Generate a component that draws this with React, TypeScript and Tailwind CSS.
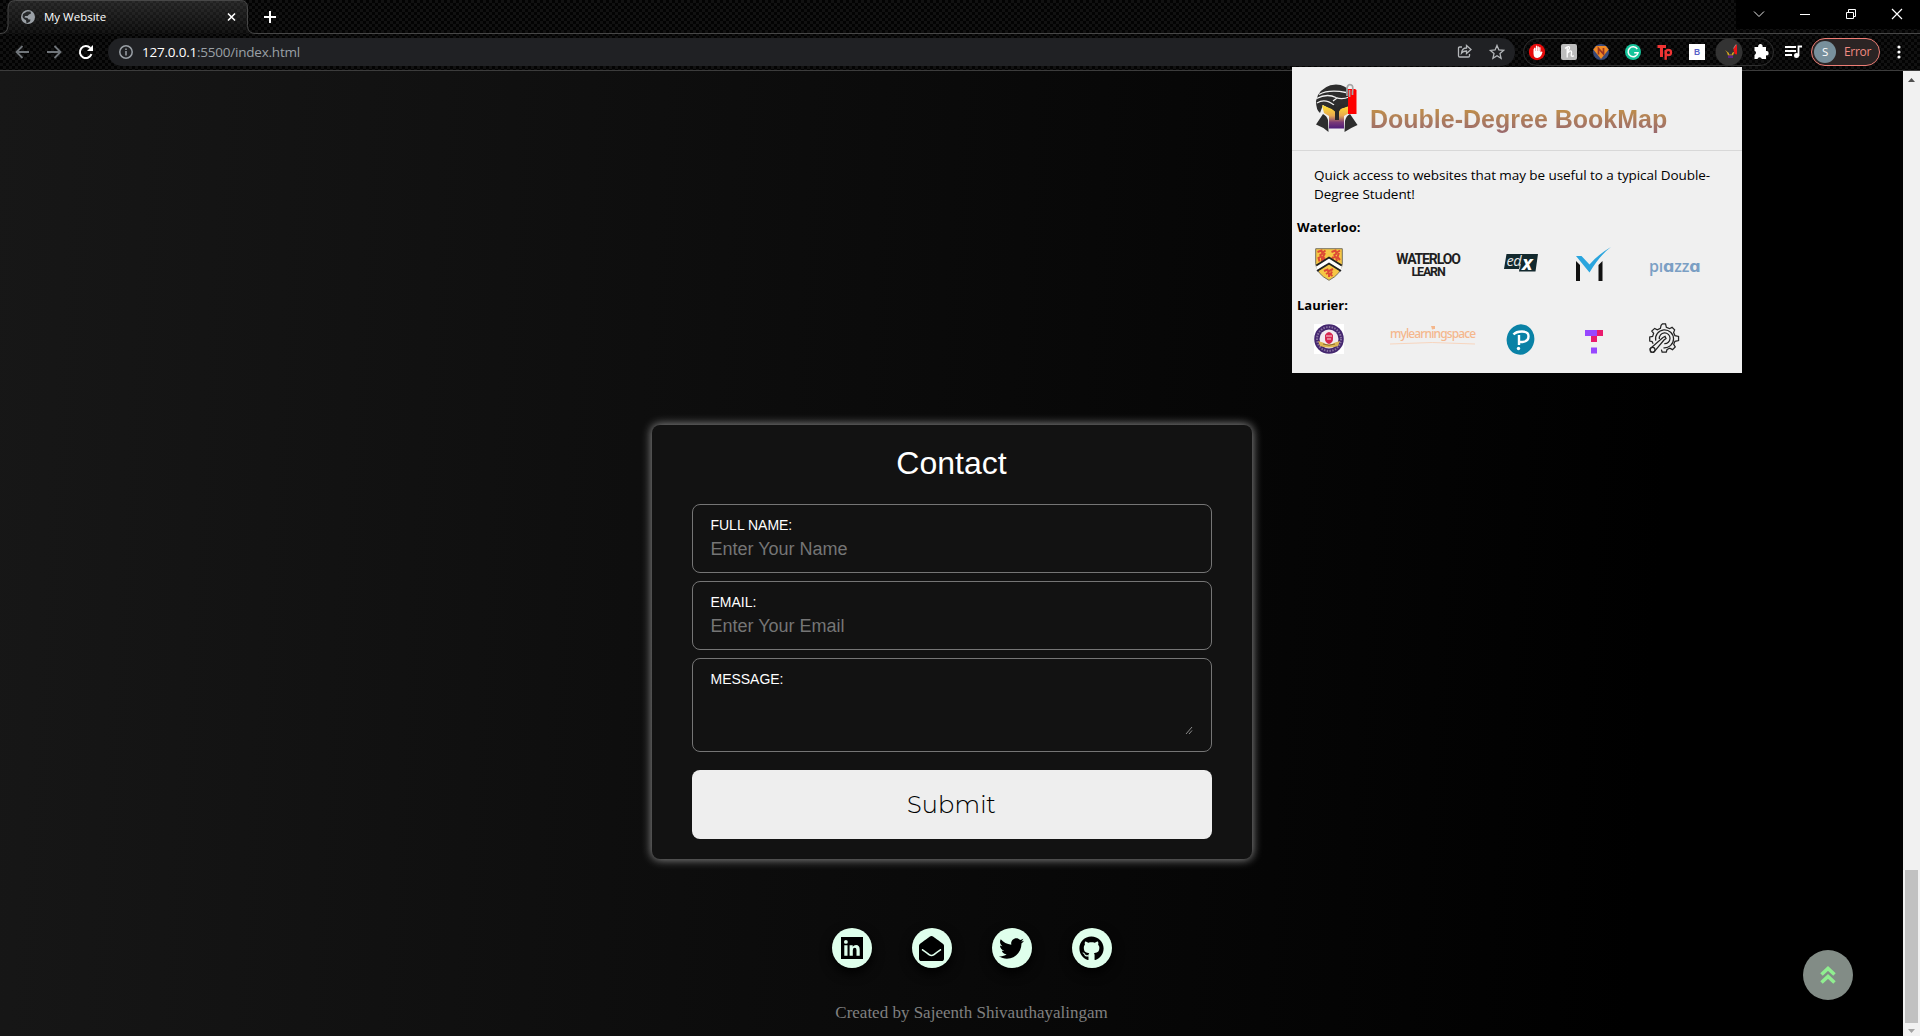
import React from "react";
import { FaEnvelopeOpen, FaTwitter, FaGithub } from "react-icons/fa";

const UI = "font-['Open_Sans','Noto_Sans',sans-serif]";
const ARIAL = "font-['Liberation_Sans',Arial,sans-serif]";

const carbon =
  "bg-[#050505] bg-[image:repeating-conic-gradient(#111_0_25%,#030303_0_50%)] bg-[length:6px_6px]";

function TabStrip() {
  return (
    <div className="relative flex h-[34px] items-start">
      <div className="absolute inset-0 border-b border-[#474747]" />
      <svg className="relative h-[34px] w-[258px] shrink-0" viewBox="0 0 258 34">
        <defs>
          <pattern id="weave" width="6" height="6" patternUnits="userSpaceOnUse">
            <path d="M0 0h6v6H0z" fill="#0b0b0b" />
            <path d="M0 0h3v3H0zM3 3h3v3H3z" fill="#151515" />
          </pattern>
          <linearGradient id="sheen" x2="0" y2="1">
            <stop stopColor="#fff" stopOpacity=".1" />
            <stop offset="1" stopColor="#fff" stopOpacity="0" />
          </linearGradient>
        </defs>
        <path d="M0 34v-.5q8 0 8-8V8q0-7.500 7.500-7.500h225Q247.500.5 247.500 8v17.500q0 8 8 8h2.500v.5z" fill="url(#weave)" />
        <path d="M0 33.500q8 0 8-8V8q0-7.500 7.500-7.500h225Q247.500.5 247.500 8v17.500q0 8 8 8h2.500" fill="url(#sheen)" stroke="#474747" />
        <circle cx="28" cy="17" r="7" fill="#9aa0a6" />
        <path d="M27 11.500h3.500l.5 2-2 1-1.500 1.500H25l-.5 1.500 3 .5 1 1.500h2l-.5 2-2.500 1.500-1 .3-.5-3-2-1.300-1.500-2 .5-3z" fill="#26282a" />
        <path d="M228 13.500l7 7m0-7l-7 7" stroke="#fff" strokeWidth="1.600" />
      </svg>
      <div className={`absolute left-[44px] top-[8px] text-[11.500px] leading-[18px] text-white ${UI}`}>My Website</div>
      <svg className="relative ml-[6px] mt-[11px] size-3" viewBox="0 0 12 12">
        <path d="M6 0v12M0 6h12" stroke="#fff" strokeWidth="2" />
      </svg>
      <svg className="relative ml-auto h-[29px] w-[184px] bg-black" viewBox="0 0 184 29" fill="none" stroke="#e6e6e6">
        <path d="M18 11.500l5 5 5-5" />
        <path d="M64 14.500h10" stroke="#fff" />
        <path d="M110.500 12.500h7v6h-7zM112.500 12v-2.500h7v7h-2" stroke="#fff" />
        <path d="M156 9l10 10m0-10l-10 10" stroke="#fff" strokeWidth="1.200" />
      </svg>
    </div>
  );
}

function NavIcons() {
  return (
    <svg className="h-[28px] w-[108px] shrink-0" viewBox="0 0 108 28" fill="none">
      <g stroke="#70757a" strokeWidth="1.800">
        <path d="M29 14H16.500m6-6l-6 6 6 6" />
        <path d="M47 14h13.500m-6-6l6 6-6 6" />
      </g>
      <path d="M91.500 16.200a6 6 0 1 1-1.200-6.200" stroke="#fff" strokeWidth="2" />
      <path d="M93 7v6h-6z" fill="#fff" />
    </svg>
  );
}

function ExtensionIcons() {
  return (
    <svg className="h-[28px] w-[252px] shrink-0" viewBox="0 0 252 28">
      <rect x=".5" y=".5" width="250" height="27" rx="13.500" fill="none" stroke="#2e2e2e" />
      <circle cx="14" cy="14" r="8.200" fill="#e60b0b" />
      <path d="M10.500 11.500v4q0 4.500 4 4.500 2.500 0 4-3l1-3q-1-1-2 .5V9.500q-.7-1-1.300 0V13h-.3V8.700q-.7-1-1.300 0V13h-.3V8q-.8-1-1.400 0v5h-.3v-3q-.8-1-1.400 0z" fill="#fff" />
      <rect x="38" y="6" width="16" height="16" rx="2" fill="#bdbdbd" />
      <path d="M42 10.500q2.500-2.500 4-1.800 1.500 1.300-1.300 4.300M44.200 9.500v10M44.500 15q2.500-3 3.800-1.800.7 1-.1 3.800-.2 2 2.800.8" fill="none" stroke="#fff" strokeWidth="1.300" />
      <circle cx="78" cy="14" r="8" fill="#3a4a78" />
      <path d="M70.300 11.500l3-3.500h9.400l3 3.500-7.700 9.500z" fill="#f08a24" />
      <path d="M75.500 16.500V10.500l5 5.500V10" stroke="#9c3420" strokeWidth="1.700" fill="none" />
      <circle cx="110" cy="14" r="8" fill="#15c39a" />
      <path d="M114.300 11a5 5 0 1 0 .7 3.800h-3.800" fill="none" stroke="#fff" strokeWidth="1.500" />
      <g fill="none" stroke="#f03434" strokeWidth="3">
        <path d="M134.500 8.500h8.500M138.500 8v11" />
        <circle cx="145.500" cy="14.500" r="2.600" strokeWidth="2.200" />
        <path d="M142.700 12v9.800" strokeWidth="2.400" />
      </g>
      <path d="M166 6h16v16h-16z" fill="#fff" />
      <text x="174" y="17" textAnchor="middle" fontSize="8.500" fontWeight="700" fill="#5a62c8" fontFamily="Liberation Sans">B</text>
      <circle cx="206" cy="14" r="13.500" fill="#333" />
      <path d="M202 12l2 2.500 1 3h5l1.500-4-2.500 1.500v1.500h-3V15z" fill="#d1a31f" />
      <path d="M205 17.500h5V20h-5z" fill="#5b2487" />
      <path d="M210.500 12q0-4 2.500-5.500l1 .5v9.500l-2.300-.5z" fill="#f01414" />
      <path d="M210.500 10.500l2.500-4" stroke="#888" />
      <path d="M231.500 9h3.700a2.300 2.300 0 1 1 4.400 0h3.400v4a2.200 2.200 0 1 1 0 4.300V21h-4.200a2.200 2.200 0 0 0-4.300 0h-3v-4a2.300 2.300 0 0 0 0-4.300z" fill="#fff" />
    </svg>
  );
}

function Toolbar() {
  return (
    <div className="flex h-[37px] items-center border-b border-[#3c3c3c]">
      <NavIcons />
      <div className="flex h-[28px] w-[1407px] shrink-0 items-center rounded-full bg-[#202124]">
        <svg className="ml-[11px] size-[14px]" viewBox="0 0 14 14" fill="none" stroke="#9aa0a6" strokeWidth="1.500">
          <circle cx="7" cy="7" r="6.200" />
          <path d="M7 6v4.500M7 3.500V5" />
        </svg>
        <div className={`ml-[9px] text-[13.500px] leading-[18px] tracking-[-0.22px] text-[#9aa0a6] ${UI}`}>
          <span className="text-white">127.0.0.1</span>:5500/index.html
        </div>
        <svg className="ml-auto mr-[10px] h-[28px] w-[48px]" viewBox="0 0 48 28" fill="none" stroke="#b4b7ba" strokeWidth="1.300">
          <path d="M5 9H2.700Q1.500 9 1.500 10.200v7.600Q1.500 19 2.700 19h8.600q1.200 0 1.200-1.200V16" />
          <path d="M4.500 15q.5-5 5-5V7.500l4.500 4-4.500 4V13q-3.500 0-5 2z" />
          <path d="M40 7.500l1.900 4.500 4.700.4-3.600 3.200 1.100 4.700-4.100-2.500-4.100 2.500 1.100-4.700-3.600-3.200 4.700-.4z" />
        </svg>
      </div>
      <div className="ml-[8px] flex">
        <ExtensionIcons />
      </div>
      <svg className="ml-[10px] h-[28px] w-[17px]" viewBox="0 0 17 28" fill="none" stroke="#fff" strokeWidth="1.800">
        <path d="M0 9h11M0 13h11M0 17h7M13.500 18V8.500H17" />
        <circle cx="11.500" cy="17.500" r="1.600" fill="#fff" />
      </svg>
      <div className={`ml-[9px] flex h-[28px] w-[69px] items-center rounded-full border border-[#ee7d75] bg-[#2b2424] text-[12px] tracking-[-0.3px] text-[#f28b82] ${UI}`}>
        <span className="ml-[2px] flex size-[22px] items-center justify-center rounded-full bg-[#78909c] text-[11.500px] text-white">S</span>
        <span className="ml-[8px]">Error</span>
      </div>
      <svg className="ml-[17px] h-[14px] w-[4px]" viewBox="0 0 4 14" fill="#fff">
        <circle cx="2" cy="2" r="1.600" />
        <circle cx="2" cy="7" r="1.600" />
        <circle cx="2" cy="12" r="1.600" />
      </svg>
    </div>
  );
}

function Helmet() {
  return (
    <svg className="h-[50px] w-[43px]" viewBox="0 0 43 50">
      <defs>
        <linearGradient id="visor" gradientUnits="userSpaceOnUse" x1="0" y1="22" x2="0" y2="46">
          <stop offset=".1" stopColor="#fdd835" />
          <stop offset=".45" stopColor="#e8a850" />
          <stop offset=".72" stopColor="#7a3a78" />
          <stop offset="1" stopColor="#4b1979" />
        </linearGradient>
      </defs>
      <path d="M3 12Q9 2 21 1.500 31 2 34 8v16l-8 2-6 3-12-7-3 8Q1 27 1 18z" fill="#2d2d2d" />
      <path d="M1.500 15.500Q12 10 21 14.500 27 17 34 14M4 11.500Q14 6 31 9.500M22 15l-4 3M2 20q8-5 17 2" stroke="#f0f0f0" strokeWidth="1.300" fill="none" />
      <path d="M7 22l11 4.500L21 29l3-2.500L34 23v7l-5 3v12.500H14V33l-5-3z" fill="url(#visor)" />
      <path d="M16 23l4-1 2 3 4-3.500 7 1.500-7 2.500-2 3V37h-4v-8.500L17 26z" fill="#292929" />
      <path d="M8 31q4 2 5 6l.5 12Q8 44 1 41.500zM35 31q-4 2-5 7l-.5 11q6-4 13-7z" fill="#2d2d2d" />
      <path d="M33 6h7l1.500 1v24H33z" fill="#fe0000" />
      <path d="M32 13V5q1-4.500 4.500-3 2 1 1 7v3M34.500 7v7" fill="none" stroke="#a6a6a6" strokeWidth="1.700" />
    </svg>
  );
}

function ShieldLogo() {
  return (
    <svg className="h-[33px] w-[28px]" viewBox="0 0 28 33">
      <path d="M.7.7h26.600v15q-.6 10-13.300 16.600Q1.300 25.700.7 15.700z" fill="#f6c744" stroke="#77715f" />
      <g fill="none" stroke="#dd4a35" strokeWidth="2">
        <path d="M2.500 4l4-1.500 1 3-3 2M7 5l3.500-2.500M10 5l-2 4 2 2M7 8l-3.500 2 1 3.500M7 9v3l3-1M16.500 4l4-1.500 1 3-3 2M21 5l4-2.500M24 5l-1.500 4 2.500 3M21 8l-3 2-1-1M21 9l1 4" />
        <path d="M9 23l3.500-1.500 1 3-2.500 1.500M14 23l4-2M17 23.500l-1.500 3 2 1.500M14 25v4" />
      </g>
      <path d="M1.300 18L14 9.500 26.700 18v4.500L14 15 1.300 22.500z" fill="#fff" />
      <path d="M1.300 17.500L14 9.500l12.700 8M2 23L14 15.500 26 23" stroke="#222" strokeWidth="1.900" fill="none" />
    </svg>
  );
}

function EdxLogo() {
  return (
    <svg className="h-[19px] w-[36px] overflow-visible" viewBox="0 0 36 19">
      <path d="M2.500 1H34l-2.500 17.500H15l.4-2.500H0z" fill="#13292e" />
      <path d="M15.500 16l.8-5" stroke="#f0f0f0" strokeWidth=".8" />
      <text x="2.500" y="13" fontSize="14.500" fontStyle="italic" fontWeight="500" fill="#e8eaea" fontFamily="Open Sans" letterSpacing="-.4">ed</text>
      <text x="18" y="16.500" fontSize="20" fontStyle="italic" fontWeight="700" fill="#fff" fontFamily="Open Sans">x</text>
    </svg>
  );
}

function MobiusLogo() {
  return (
    <svg className="h-[34px] w-[35px]" viewBox="0 0 35 34">
      <path d="M0 14l4 4v16H0zM22.500 18l4-4v20h-4z" fill="#111" />
      <path d="M0 9h5.500l8 8.500Q22 7.500 35 0q-11 8-21.500 25.500z" fill="#2aa5de" />
    </svg>
  );
}

function CrestLogo() {
  return (
    <svg className="size-[30px] bg-white" viewBox="0 0 30 30">
      <circle cx="15" cy="15" r="14.800" fill="#44276f" />
      <circle cx="15" cy="15" r="12" fill="none" stroke="#8872a0" strokeWidth="2" strokeDasharray="1.500 1.300" />
      <circle cx="15" cy="15" r="9.500" fill="#f1eaf0" />
      <path d="M11 11q4-6 8 0v4q0 3.500-4 5-4-1.500-4-5z" fill="#d62650" />
      <path d="M12 12h6M13 15h4" stroke="#fff" strokeWidth=".8" />
      <path d="M4 17l5 1.500q6 4 12 0l5-1.500-2 5q-9 3-18 0z" fill="#dcb552" />
      <path d="M9 20q6 2.500 12 0" stroke="#8a6b2f" fill="none" />
    </svg>
  );
}

function PearsonLogo() {
  return (
    <svg className="size-[31px]" viewBox="0 0 31 31">
      <ellipse cx="15.500" cy="15.500" rx="13.800" ry="15.200" transform="rotate(12 15.500 15.500)" fill="#0a82a6" />
      <path d="M8.500 10.500Q11 7.500 17 7.500q6.500 0 6.500 4.700 0 5-6 5.800-2 .2-3-.3M14 11v10" fill="none" stroke="#fff" strokeWidth="2.400" />
      <circle cx="13.500" cy="24.500" r="1.700" fill="#fff" />
    </svg>
  );
}

function TopHatLogo() {
  return (
    <svg className="h-[24px] w-[18px]" viewBox="0 0 18 24">
      <path d="M0 0h12v6H0zM6 17.500h6v6H6z" fill="#9747ff" />
      <path d="M12 0h6v6h-6zM6 6h6v6H6z" fill="#ea1b6d" />
    </svg>
  );
}

function GearLogo() {
  return (
    <svg className="size-[31px]" viewBox="0 0 30 30" fill="none" stroke="#222" strokeWidth="1.200">
      <path d="M4 20l-1-2-2.300-.5v-4L3.500 13l1-3-1.800-2.300 2.800-2.500L8 6.500l3-1.300.7-3L13 .8h3l.8 3.400 3 1.300 2.500-1.300 2.500 2.500-1 2.500 1.300 3 3.500.8v4l-3.500.7-1.200 3 1.500 2.500-2.600 2.600-2.700-1.500-2.600 1.300-.8 2.600h-4l-.7-2.500" />
      <path d="M6.500 17a8.700 8.700 0 1 1 7.500 7M10 15.500a5.200 5.200 0 1 1 4.800 4.500" />
      <path d="M13.500 14l2-1 1 2-2 1.500-10 12-3-.5-.5-3z" fill="#f0f0f0" />
      <circle cx="3.500" cy="26" r="2.300" fill="#f0f0f0" />
    </svg>
  );
}

function Popup() {
  return (
    <div className="absolute left-[1292px] top-[67px] h-[306px] w-[450px] bg-[#f0f0f0] text-black">
      <div className="flex h-[84px] border-b border-[#d8d8d8] pl-[23px] pt-[16px]">
        <Helmet />
        <h1 className={`ml-[12px] mt-[21px] h-[32px] whitespace-nowrap bg-gradient-to-b from-[#c9973a] to-[#94636f] bg-clip-text text-[25px] leading-[30px] font-bold text-transparent ${ARIAL}`}>
          Double-Degree BookMap
        </h1>
      </div>
      <p className={`ml-[22px] mt-[15px] whitespace-nowrap text-[13.500px] leading-[19px] tracking-[-0.07px] ${UI}`}>
        Quick access to websites that may be useful to a typical Double-
        <br />
        Degree Student!
      </p>
      <h2 className={`ml-[5px] mt-[13px] h-[20px] text-[13px] leading-[20px] font-bold ${UI}`}>Waterloo:</h2>
      <div className="grid h-[58px] grid-cols-[65px_120px_73px_73px_80px] pl-[22px]">
        <div className="pl-[1px] pt-[11px]"><ShieldLogo /></div>
        <div className="flex flex-col items-center pr-[22px] pt-[15px] font-['Roboto',sans-serif] font-bold text-[#1f1f1f]">
          <span className="text-[14px] leading-[15px] tracking-[-1.15px]">WATERLOO</span>
          <span className="text-[12.500px] leading-[10px] tracking-[-1.2px]">LEARN</span>
        </div>
        <div className="pl-[5px] pt-[16px]"><EdxLogo /></div>
        <div className="pl-[4px] pt-[10px]"><MobiusLogo /></div>
        <div className="pl-[4px] pt-[19px] font-['Open_Sans','DejaVu_Sans',sans-serif] text-[16px] leading-[20px] font-semibold text-[#7b9fc4]">
          <span className="inline-block w-[48px] whitespace-nowrap tracking-[-0.2px]">pıɑzzɑ</span>
        </div>
      </div>
      <h2 className={`ml-[5px] h-[20px] text-[13px] leading-[20px] font-bold ${UI}`}>Laurier:</h2>
      <div className="grid grid-cols-[65px_120px_73px_73px_80px] pl-[22px]">
        <div className="pt-[9px]"><CrestLogo /></div>
        <div className="relative flex flex-col pl-[11px] pt-[10px]">
          <span className="font-['Noto_Sans','Open_Sans',sans-serif] text-[12px] leading-[17px] font-medium tracking-[-0.88px] text-[#f5b78c]">mylearningspace</span>
          <svg className="h-[3px] w-[85px]" viewBox="0 0 85 3"><path d="M0 2q42-3 85 0" stroke="#f7d5be" fill="none" /></svg>
          <svg className="absolute left-[50px] top-[10px] h-[5px] w-[8px]" viewBox="0 0 8 5"><path d="M2 1h4v3H3z" fill="#f5b78c" /></svg>
        </div>
        <div className="pl-[6px] pt-[9px]"><PearsonLogo /></div>
        <div className="pl-[13px] pt-[15px]"><TopHatLogo /></div>
        <div className="pl-[4px] pt-[8px]"><GearLogo /></div>
      </div>
    </div>
  );
}

function Field({ label, children, className }: { label: string; children: React.ReactNode; className: string }) {
  return (
    <div className={`flex flex-col rounded-[8px] border border-[#757575] px-[18px] pt-[11px] ${className}`}>
      <label className="text-[14px] leading-[18px] tracking-[-0.02px] text-white">{label}</label>
      {children}
    </div>
  );
}

function ContactCard() {
  const input = "mt-[1px] h-[28px] w-full bg-transparent text-[18px] text-white outline-none placeholder:text-[#757575] placeholder:opacity-100";
  return (
    <form className={`h-[434px] w-[600px] rounded-[8px] bg-[#121212] px-[40px] shadow-[0_0_10px_1px_#8a8a8a] ${ARIAL}`}>
      <h2 className="h-[79px] pt-[19px] text-center text-[32px] leading-[38px] text-white">Contact</h2>
      <Field label="FULL NAME:" className="h-[69px]">
        <input className={input} placeholder="Enter Your Name" />
      </Field>
      <Field label="EMAIL:" className="mt-[8px] h-[69px]">
        <input className={input} placeholder="Enter Your Email" />
      </Field>
      <Field label="MESSAGE:" className="mt-[8px] h-[94px]">
        <svg className="mt-[38px] size-[8px] self-end" viewBox="0 0 8 8" stroke="#aaa" strokeWidth=".8">
          <path d="M1 8l6-7M4 8l3-3.500" />
        </svg>
      </Field>
      <button type="button" className="mt-[18px] flex h-[69px] w-full items-center justify-center rounded-[8px] bg-[#eee] text-[24px] tracking-[0.2px] text-black font-['Montserrat','Open_Sans',sans-serif] font-light">
        Submit
      </button>
    </form>
  );
}

function SquareLinkedIn() {
  return (
    <svg className="size-[22px]" viewBox="0 0 22 22">
      <path d="M0 0h22v22H0z" fill="#000" />
      <path d="M3.300 8.300h3.200v10.400H3.300zM8.600 8.300h3.100v1.500q1-1.800 3.300-1.800 3.700 0 3.700 4.500v6.200h-3.200v-5.600q0-2.300-1.700-2.300-2 0-2 2.400v5.500H8.600z" fill="#dfffec" />
      <circle cx="4.900" cy="4.900" r="1.900" fill="#dfffec" />
    </svg>
  );
}

const socials = [
  { name: "LinkedIn", icon: <SquareLinkedIn /> },
  { name: "Email", icon: <FaEnvelopeOpen size={25} /> },
  { name: "Twitter", icon: <FaTwitter size={25} /> },
  { name: "GitHub", icon: <FaGithub size={25} /> },
];

export default function App() {
  return (
    <div className="relative flex h-[1036px] w-[1920px] flex-col overflow-hidden bg-black">
      <header className={carbon}>
        <TabStrip />
        <Toolbar />
      </header>
      <div className="flex min-h-0 flex-1">
        <main className="relative flex flex-1 flex-col items-center bg-[linear-gradient(94deg,#171717_0%,#000_86%)] pt-[354px]">
          <ContactCard />
          <div className="ml-[40px] mt-[69px] flex gap-[40px]">
            {socials.map(({ name, icon }) => (
              <a key={name} aria-label={name} className="flex size-[40px] items-center justify-center rounded-full bg-[#dfffec] text-black shadow-[0_5px_12px_#000]">
                {icon}
              </a>
            ))}
          </div>
          <p className="ml-[40px] mt-[35px] whitespace-nowrap font-['Liberation_Serif',serif] text-[17px] leading-[20px] text-[#808080]">
            Created by Sajeenth Shivauthayalingam
          </p>
          <button type="button" aria-label="Back to top" className="absolute right-[50px] top-[879px] flex size-[50px] items-center justify-center rounded-full bg-[#828c86]">
            <svg className="h-[18px] w-[16px]" viewBox="0 0 16 18" fill="none" stroke="#90ee90" strokeWidth="3.600">
              <path d="M1.500 8.500L8 2.500l6.500 6M1.500 16.500L8 10.500l6.500 6" />
            </svg>
          </button>
        </main>
        <div className="flex w-[17px] flex-col items-center bg-[#f1f1f1]">
          <svg className="h-[17px] w-[17px]" viewBox="0 0 17 17"><path d="M5 11l3.500-4 3.500 4z" fill="#505050" /></svg>
          <div className="mt-[782px] h-[153px] w-[13px] bg-[#c1c1c1]" />
          <svg className="h-[13px] w-[17px]" viewBox="0 0 17 13"><path d="M5 6l3.500 4L12 6z" fill="#a3a3a3" /></svg>
        </div>
      </div>
      <Popup />
    </div>
  );
}
